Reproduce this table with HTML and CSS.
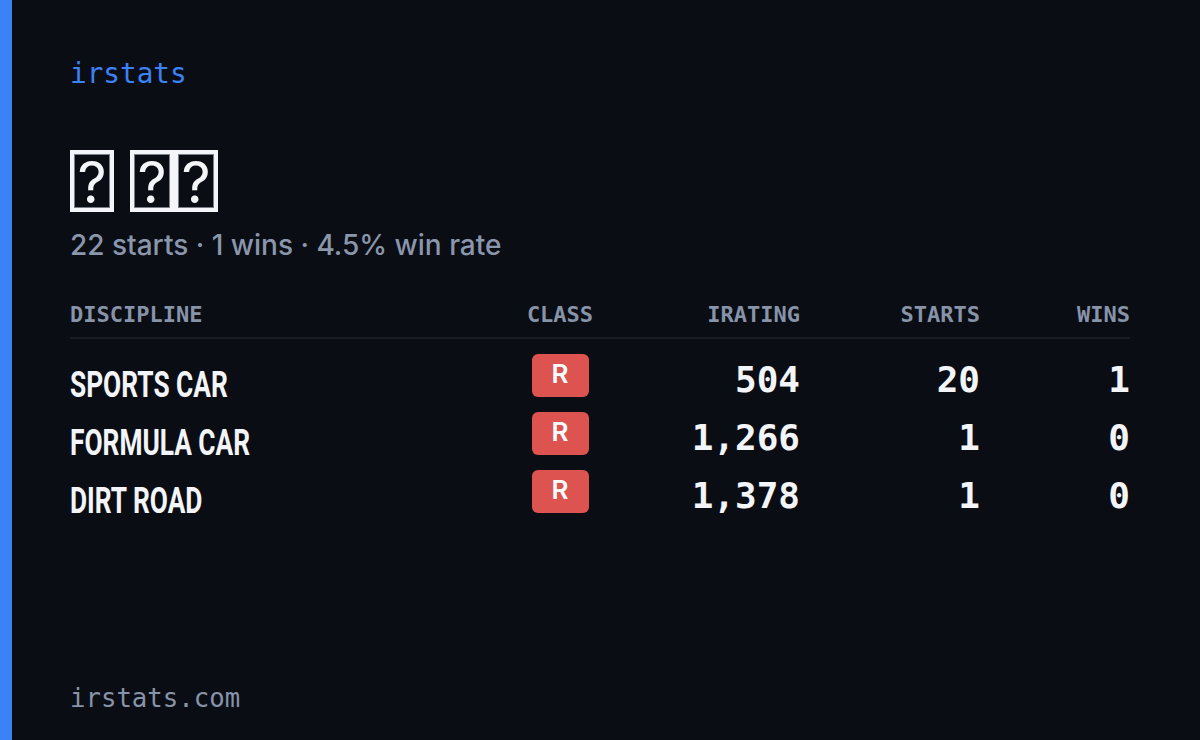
FILE: index.html
```html
<!DOCTYPE html>
<html lang="en">
<head>
<meta charset="utf-8">
<title>irstats</title>
<link rel="stylesheet" href="styles.css">
</head>
<body>
<div class="card">
  <div class="accent"></div>
  <main class="main">
    <div class="brand">irstats</div>
    <h1 class="title">
      <span class="word"><span class="tofu">?</span></span>
      <span class="word"><span class="tofu">?</span><span class="tofu">?</span></span>
    </h1>
    <p class="summary">22 starts · 1 wins · 4.5% win rate</p>
    <div class="table">
      <div class="row head">
        <div class="cell left">DISCIPLINE</div>
        <div class="cell center">CLASS</div>
        <div class="cell right">IRATING</div>
        <div class="cell right">STARTS</div>
        <div class="cell right">WINS</div>
      </div>
      <div class="body">
        <div class="row item">
          <div class="name"><span class="name-text">SPORTS CAR</span></div>
          <div class="klass"><span class="badge">R</span></div>
          <div class="num">504</div>
          <div class="num">20</div>
          <div class="num">1</div>
        </div>
        <div class="row item">
          <div class="name"><span class="name-text">FORMULA CAR</span></div>
          <div class="klass"><span class="badge">R</span></div>
          <div class="num">1,266</div>
          <div class="num">1</div>
          <div class="num">0</div>
        </div>
        <div class="row item">
          <div class="name"><span class="name-text">DIRT ROAD</span></div>
          <div class="klass"><span class="badge">R</span></div>
          <div class="num">1,378</div>
          <div class="num">1</div>
          <div class="num">0</div>
        </div>
      </div>
    </div>
    <div class="footer">irstats.com</div>
  </main>
</div>
</body>
</html>
```

FILE: styles.css
```css
* { box-sizing: border-box; }
html, body { margin: 0; padding: 0; }
body {
  width: 1200px;
  height: 740px;
  background: #0a0d14;
  overflow: hidden;
}
.card {
  display: flex;
  width: 1200px;
  height: 740px;
}
.accent {
  width: 12px;
  flex: none;
  background: #3b82f6;
}
.main {
  flex: 1;
  display: flex;
  flex-direction: column;
  padding: 58px 70px 27px 58px;
}
.brand {
  font-family: "DejaVu Sans Mono", monospace;
  font-size: 27.7px;
  line-height: 32px;
  color: #3b82f6;
}
.title {
  display: flex;
  gap: 16px;
  height: 62px;
  margin: 60px 0 0;
}
.word {
  display: flex;
}
.tofu {
  display: flex;
  align-items: center;
  justify-content: center;
  width: 44px;
  height: 62px;
  padding-top: 2px;
  border: 4px solid #f4f5f9;
  box-shadow: inset 0 0 0 1px #7a7e88;
  background: #0a0d14;
  font-family: "Inter", sans-serif;
  font-weight: 400;
  font-size: 57px;
  line-height: 1;
  color: #f4f5f9;
}
.summary {
  margin: 16px 0 0;
  font-family: "Inter", sans-serif;
  font-weight: 500;
  font-size: 28px;
  line-height: 34px;
  color: #8a96ab;
}
.table {
  margin-top: 40px;
}
.row {
  display: grid;
  grid-template-columns: 430px 120px 180px 180px 150px;
}
.head {
  padding-bottom: 9px;
  border-bottom: 2px solid #181c26;
}
.cell {
  font-family: "DejaVu Sans Mono", monospace;
  font-weight: 700;
  font-size: 22px;
  line-height: 26px;
  color: #8793a8;
}
.left { text-align: left; }
.center { text-align: center; }
.right { text-align: right; }
.body {
  padding-top: 8px;
}
.item {
  height: 58px;
  align-items: start;
}
.name {
  padding-top: 17px;
  line-height: 42px;
}
.name-text {
  display: inline-block;
  font-family: "Roboto", sans-serif;
  font-weight: 700;
  font-size: 36px;
  color: #f3f5fa;
  white-space: nowrap;
  transform: scaleX(0.73);
  transform-origin: left center;
}
.klass {
  display: flex;
  justify-content: center;
  padding-top: 7px;
}
.badge {
  display: block;
  width: 57px;
  height: 43px;
  padding-bottom: 4px;
  border-radius: 6px;
  background: #dc5350;
  color: #ffffff;
  font-family: "Inter", sans-serif;
  font-weight: 600;
  font-size: 26px;
  line-height: 39px;
  text-align: center;
}
.num {
  padding-top: 12px;
  font-family: "DejaVu Sans Mono", monospace;
  font-weight: 700;
  font-size: 36px;
  line-height: 42px;
  color: #f3f5fa;
  text-align: right;
}
.footer {
  margin-top: auto;
  font-family: "DejaVu Sans Mono", monospace;
  font-size: 25.7px;
  line-height: 30px;
  color: #8793a8;
}
```
